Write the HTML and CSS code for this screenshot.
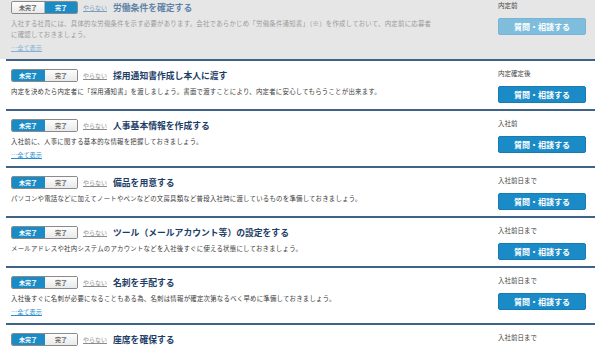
FILE: index.html
```html
<!DOCTYPE html>
<html lang="ja">
<head>
  <meta charset="UTF-8">
  <meta name="viewport" content="width=device-width, initial-scale=1.0">
  <title>入社準備タスク</title>
  <link rel="stylesheet" href="styles.css">
</head>
<body>
  <div class="tasks">

    <div class="task done">
      <div class="main">
        <div class="head">
          <div class="toggle"><span class="seg">未完了</span><span class="seg on">完了</span></div>
          <a class="skip" href="#">やらない</a>
          <h3 class="title">労働条件を確定する</h3>
        </div>
        <p class="desc">入社する社員には、具体的な労働条件を示す必要があります。会社であらかじめ「労働条件通知書」（※）を作成しておいて、内定前に応募者に確認しておきましょう。</p>
        <a class="more" href="#">…全て表示</a>
      </div>
      <div class="side">
        <p class="when">内定前</p>
        <button class="ask">質問・相談する</button>
      </div>
    </div>

    <div class="task">
      <div class="main">
        <div class="head">
          <div class="toggle"><span class="seg on">未完了</span><span class="seg">完了</span></div>
          <a class="skip" href="#">やらない</a>
          <h3 class="title">採用通知書作成し本人に渡す</h3>
        </div>
        <p class="desc">内定を決めたら内定者に「採用通知書」を渡しましょう。書面で渡すことにより、内定者に安心してもらうことが出来ます。</p>
      </div>
      <div class="side">
        <p class="when">内定確定後</p>
        <button class="ask">質問・相談する</button>
      </div>
    </div>

    <div class="task">
      <div class="main">
        <div class="head">
          <div class="toggle"><span class="seg on">未完了</span><span class="seg">完了</span></div>
          <a class="skip" href="#">やらない</a>
          <h3 class="title">人事基本情報を作成する</h3>
        </div>
        <p class="desc">入社前に、人事に関する基本的な情報を把握しておきましょう。</p>
        <a class="more" href="#">…全て表示</a>
      </div>
      <div class="side">
        <p class="when">入社前</p>
        <button class="ask">質問・相談する</button>
      </div>
    </div>

    <div class="task">
      <div class="main">
        <div class="head">
          <div class="toggle"><span class="seg on">未完了</span><span class="seg">完了</span></div>
          <a class="skip" href="#">やらない</a>
          <h3 class="title">備品を用意する</h3>
        </div>
        <p class="desc">パソコンや電話などに加えてノートやペンなどの文房具類など普段入社時に渡しているものを準備しておきましょう。</p>
      </div>
      <div class="side">
        <p class="when">入社前日まで</p>
        <button class="ask">質問・相談する</button>
      </div>
    </div>

    <div class="task">
      <div class="main">
        <div class="head">
          <div class="toggle"><span class="seg on">未完了</span><span class="seg">完了</span></div>
          <a class="skip" href="#">やらない</a>
          <h3 class="title">ツール（メールアカウント等）の設定をする</h3>
        </div>
        <p class="desc">メールアドレスや社内システムのアカウントなどを入社後すぐに使える状態にしておきましょう。</p>
      </div>
      <div class="side">
        <p class="when">入社前日まで</p>
        <button class="ask">質問・相談する</button>
      </div>
    </div>

    <div class="task">
      <div class="main">
        <div class="head">
          <div class="toggle"><span class="seg on">未完了</span><span class="seg">完了</span></div>
          <a class="skip" href="#">やらない</a>
          <h3 class="title">名刺を手配する</h3>
        </div>
        <p class="desc">入社後すぐに名刺が必要になることもある為、名刺は情報が確定次第なるべく早めに準備しておきましょう。</p>
        <a class="more" href="#">…全て表示</a>
      </div>
      <div class="side">
        <p class="when">入社前日まで</p>
        <button class="ask">質問・相談する</button>
      </div>
    </div>

    <div class="task">
      <div class="main">
        <div class="head">
          <div class="toggle"><span class="seg on">未完了</span><span class="seg">完了</span></div>
          <a class="skip" href="#">やらない</a>
          <h3 class="title">座席を確保する</h3>
        </div>
        <p class="desc">入社初日から業務に取り掛かれるよう、座席を確保しておきましょう。</p>
      </div>
      <div class="side">
        <p class="when">入社前日まで</p>
        <button class="ask">質問・相談する</button>
      </div>
    </div>

  </div>
</body>
</html>
```

FILE: styles.css
```css
body {
  margin: 0;
  font-family: "Noto Sans CJK JP", "Liberation Sans", sans-serif;
  background-color: #fff;
  color: #333;
  overflow: hidden;
}
.tasks {
  width: 589px;
  margin-left: 6px;
  margin-top: -7px;
}
.task {
  display: flex;
  justify-content: space-between;
  padding: 8px 9px 6px 5px;
  border-top: 2px solid #3f6386;
}
.task:first-child {
  border-top: none;
}
.task.done {
  background-color: #e6e6e6;
  margin-left: -6px;
  padding-left: 11px;
}
.main {
  width: 425px;
}
.head {
  display: flex;
  align-items: center;
  height: 13px;
}
.toggle {
  display: flex;
  height: 11px;
  border: 1px solid #8a8a8a;
  border-radius: 2px;
  overflow: hidden;
}
.seg {
  display: block;
  height: 11px;
  line-height: 11px;
  font-size: 6px;
  font-weight: bold;
  text-align: center;
  color: #666;
  background: linear-gradient(#fdfdfd, #e9e9e9);
}
.seg:first-child {
  width: 32px;
  border-right: 1px solid #b5b5b5;
}
.seg:last-child {
  width: 32px;
}
.seg.on {
  color: #fff;
  background: #1b8bc6;
  border-color: #1b8bc6;
}
.skip {
  margin-left: 5px;
  font-size: 6px;
  color: #8c8c8c;
}
.title {
  margin: 0 0 0 6px;
  font-size: 8.8px;
  font-weight: bold;
  color: #1c3d66;
  line-height: 12px;
  white-space: nowrap;
}
.desc {
  margin: 4px 0 0;
  font-size: 6.4px;
  letter-spacing: 0.25px;
  line-height: 11px;
  color: #3a3a3a;
}
.more {
  display: block;
  width: fit-content;
  margin-top: 3px;
  font-size: 6.2px;
  line-height: 10px;
  color: #2a8ccc;
}
.side {
  width: 88px;
}
.when {
  margin: 0;
  font-size: 6.5px;
  line-height: 8px;
  color: #444;
}
.ask {
  display: block;
  width: 88px;
  height: 17px;
  margin-top: 9px;
  padding: 0;
  font-family: inherit;
  font-size: 8px;
  font-weight: bold;
  color: #fff;
  background-color: #1b8bc7;
  border: 1px solid #167cb2;
  border-radius: 2px;
  cursor: pointer;
}
.done .title {
  color: #5f83a8;
}
.done .desc {
  color: #9a9a9a;
}
.done .skip {
  color: #7b9cbc;
}
.done .more {
  color: #7fb2d8;
}
.done .ask {
  background-color: #7fbddd;
  border-color: #79b4d4;
}
```
